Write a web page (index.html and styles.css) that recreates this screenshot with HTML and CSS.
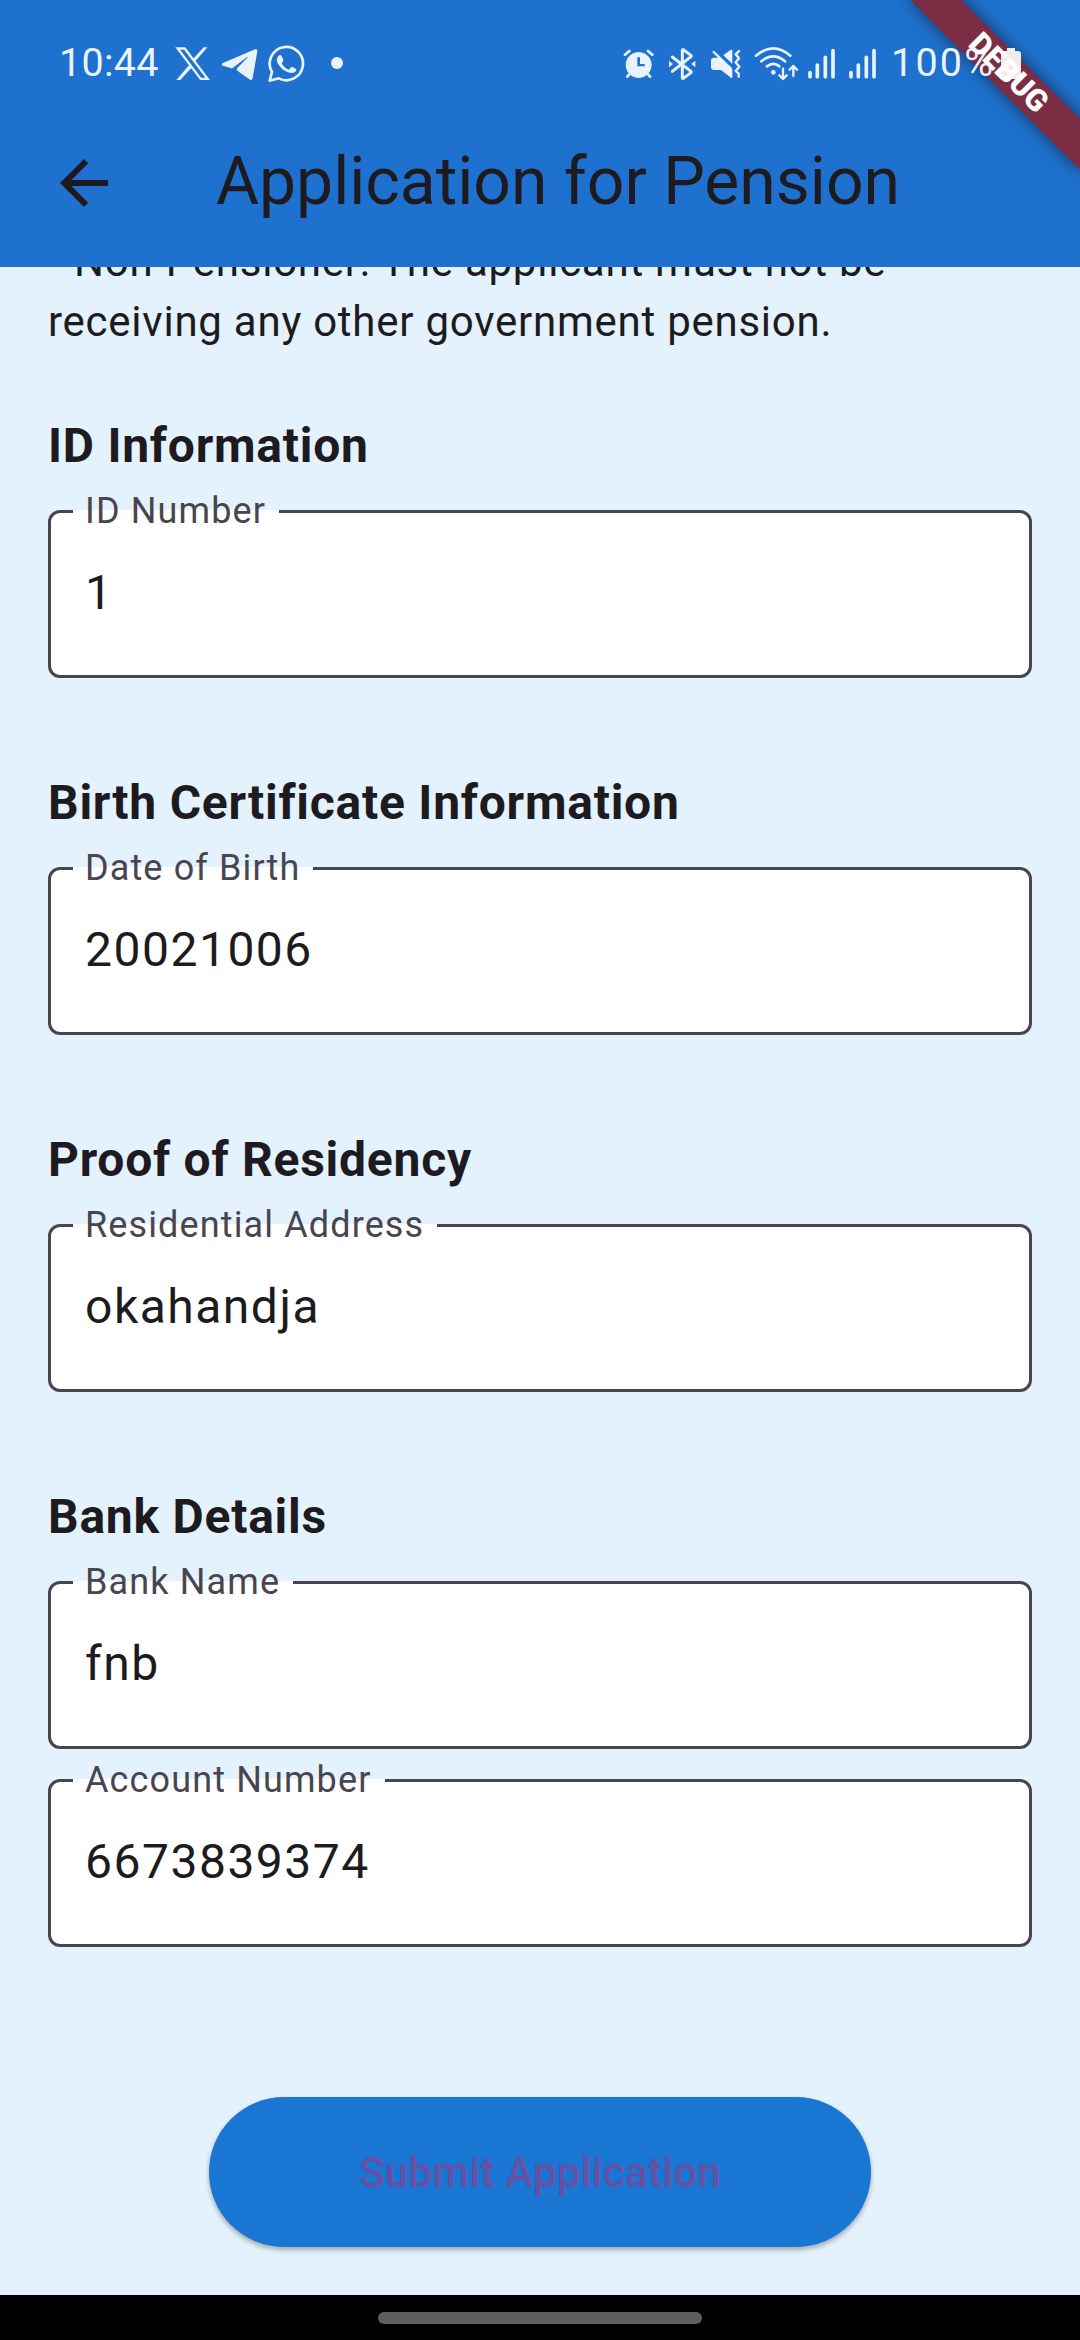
FILE: index.html
```html
<!DOCTYPE html>
<html lang="en">
<head>
<meta charset="utf-8">
<title>Application for Pension</title>
<link rel="stylesheet" href="styles.css">
</head>
<body>
<div class="screen">
  <header class="top">
    <div class="debug"><span class="debug-band">DEBUG</span></div>
    <div class="status">
      <span class="clock">10:44</span>
      <svg class="ic x" width="35" height="43" viewBox="405 66 105 129"><path fill="none" stroke="currentColor" stroke-width="7" d="M413 85.500H434L503 176.500H482Z"/><path d="M491 82H502L466 124L459 117ZM447 136L454 144L421 180H409Z"/></svg>
      <svg class="ic tg" width="37" height="43" viewBox="543 66 111 129"><path d="M547 130Q544 134 548 137L572 144Q577 146 581 142L620 112Q625 109 621 114L592 144Q588 149 593 153L628 178Q636 183 638 174L652 94Q653 86 645 88Z"/></svg>
      <svg class="ic wa" width="37" height="43" viewBox="684 66 111 129"><path d="M689 182L696 156A50 50 0 1 1 716 175Z" fill="none" stroke="currentColor" stroke-width="8" stroke-linejoin="round"/><path d="M716 107Q722 103 725 108L730 120Q731 124 725 130Q733 145 747 149L753 142Q756 140 759 142L768 147Q771 150 766 155Q758 162 744 157Q724 150 713 130Q707 116 716 107Z"/></svg>
      <svg class="ic dot" width="14" height="43" viewBox="870 66 42 129"><circle cx="891" cy="129" r="18"/></svg>
      <div class="status-right">
        <svg class="ic" width="31" height="43" viewBox="69 66 93 129"><path fill-rule="evenodd" d="M116 96A39 39 0 1 1 115.900 96ZM112 112V139H134V132H120V112Z"/><path d="M75 104L88 93M157 104L144 93M87 164L82 170M145 164L150 170" stroke="currentColor" stroke-width="8" stroke-linecap="round"/></svg>
        <svg class="ic bt" width="28" height="43" viewBox="204 66 84 129"><path d="M217 111L273 154Q275 156 273 158L250 175Q247 176 247 173V91Q247 88 250 89L273 106Q275 108 273 110L217 154" fill="none" stroke="currentColor" stroke-width="9" stroke-linecap="round" stroke-linejoin="round"/><path d="M207 122V142L219 132ZM286 122V142L274 132Z"/></svg>
        <svg class="ic mute" width="32" height="43" viewBox="330 66 96 129"><path d="M342 113H361L397 149V172Q397 176 393 173L363 150H342Q333 150 333 141V122Q333 113 342 113ZM370 106L390 91Q397 87 397 94V132Z"/><path d="M341 96L392 145M417 93L407 103L417 115L407 127L418 140L407 153L416 161V170" fill="none" stroke="currentColor" stroke-width="7" stroke-linecap="round" stroke-linejoin="round"/></svg>
        <svg class="ic wifi" width="45" height="43" viewBox="462 66 135 129"><g fill="none" stroke="currentColor" stroke-width="8" stroke-linecap="round" stroke-linejoin="round"><path d="M468 107Q520 63 571 107M484 124Q520 94 555 124M501 139Q520 124 538 139"/><path stroke-width="7" d="M549 146V176M538 166L549 177L560 166M580 168V138M569 149L580 138L591 149"/></g><circle cx="520" cy="157" r="7"/></svg>
        <svg class="ic sig" width="29" height="43" viewBox="621 66 87 129"><path d="M630 158V170M652 135V170M676 112V170M699 92V170" stroke="currentColor" stroke-width="11" stroke-linecap="round"/></svg>
        <svg class="ic sig2" width="29" height="43" viewBox="621 66 87 129"><path d="M630 158V170M652 135V170M676 112V170M699 92V170" stroke="currentColor" stroke-width="11" stroke-linecap="round"/></svg>
        <span class="pct">100%</span>
        <svg class="ic batt" width="20" height="43" viewBox="0 0 20 43"><path d="M6 6H14V9H17Q20 9 20 12V34Q20 37 17 37H3Q0 37 0 34V12Q0 9 3 9H6Z"/></svg>
      </div>
    </div>
    <div class="appbar">
      <svg class="back" width="72" height="72" viewBox="0 0 24 24"><path d="M20 11H7.830l5.590-5.590L12 4l-8 8 8 8 1.410-1.410L7.830 13H20v-2z"/></svg>
      <h1 class="title">Application for Pension</h1>
    </div>
  </header>
  <main class="content">
    <p class="intro">• Non-Pensioner: The applicant must not be<br>receiving any other government pension.</p>
    <section class="group">
      <h2 class="heading">ID Information</h2>
      <div class="field"><span class="label">ID Number</span><span class="value">1</span></div>
    </section>
    <section class="group">
      <h2 class="heading">Birth Certificate Information</h2>
      <div class="field"><span class="label">Date of Birth</span><span class="value">20021006</span></div>
    </section>
    <section class="group">
      <h2 class="heading">Proof of Residency</h2>
      <div class="field"><span class="label">Residential Address</span><span class="value">okahandja</span></div>
    </section>
    <section class="group">
      <h2 class="heading">Bank Details</h2>
      <div class="field"><span class="label">Bank Name</span><span class="value">fnb</span></div>
      <div class="field"><span class="label">Account Number</span><span class="value">6673839374</span></div>
    </section>
    <button class="submit">Submit Application</button>
  </main>
  <footer class="nav"><span class="pill"></span></footer>
</div>
</body>
</html>
```
FILE: styles.css
```css
* { box-sizing: border-box; }
body { margin: 0; font-family: Roboto, "Liberation Sans", sans-serif; color: #1d1b20; }
.screen { width: 1080px; height: 2340px; display: flex; flex-direction: column; background: #e3f2fd; overflow: hidden; }

.top { position: relative; z-index: 1; flex: none; height: 267px; background: #1f71cf; overflow: hidden; }
.status { position: relative; height: 99px; padding: 42px 59px 0; display: flex; align-items: flex-start; color: rgba(240, 248, 255, 0.97); }
.ic { flex: none; display: block; fill: currentColor; }
.clock, .pct { font-size: 39.500px; line-height: 42px; white-space: nowrap; }
.clock { width: 116px; letter-spacing: 0.300px; }
.tg { margin-left: 11px; }
.wa { margin-left: 10px; }
.dot { margin-left: 25px; }
.status-right { margin-left: auto; display: flex; align-items: flex-start; width: 398px; }
.bt, .mute { margin-left: 14px; }
.wifi { margin-left: 12px; }
.sig { margin-left: 8px; }
.sig2 { margin-left: 12px; }
.pct { margin-left: 14px; width: 111px; letter-spacing: 2.200px; }
.batt { color: rgba(255, 255, 255, 0.9); }

.appbar { height: 168px; padding: 0 48px; display: flex; align-items: center; gap: 96px; }
.back { display: block; flex: none; fill: #1d1b20; }
.title { margin: 0; padding-bottom: 2px; font-size: 66px; line-height: 84px; font-weight: 400; white-space: nowrap; }

/* Corner ribbon laid diagonally across the status bar */
.debug { position: absolute; right: 0; top: 0; width: 0; height: 0; transform: rotate(45deg); }
.debug-band { position: absolute; left: -120px; top: 84px; width: 240px; height: 36px; padding-left: 2px; background: #7b2d43; box-shadow: 0 0 18px rgba(0, 0, 0, 0.5); color: #fff; font-size: 30.600px; line-height: 36px; font-weight: 900; text-align: center; }

.content { flex: 1; padding: 0 48px; display: flex; flex-direction: column; }
.intro { margin: -35px 0 0; font-size: 42px; line-height: 60px; letter-spacing: 0.750px; white-space: nowrap; }
.group { display: flex; flex-direction: column; margin-bottom: 90px; }
.intro + .group { margin-top: 59px; }
.heading { margin: 0 0 30px; font-size: 48px; line-height: 69px; font-weight: 700; letter-spacing: 0.750px; }
.field { position: relative; height: 168px; padding: 52px 34px 0; background: #fff; border: 3px solid #49454f; border-radius: 12px; }
.field + .field { margin-top: 30px; }
.label { position: absolute; left: 22px; top: -23px; padding: 0 13px 0 12px; font-size: 36px; line-height: 42px; letter-spacing: 1.125px; color: #49454f; white-space: nowrap; background: linear-gradient(#fff, #fff) 0 20px / 100% 3px no-repeat; }
.value { display: block; font-size: 48px; line-height: 56px; letter-spacing: 1.500px; }
.submit { align-self: center; margin-top: 60px; width: 662px; height: 150px; padding: 1px 0 0; border: 0; border-radius: 75px; background: #1976d2; color: #6750a4; font: 500 42px/60px Roboto, sans-serif; letter-spacing: 0.300px; box-shadow: 0 3px 5px rgba(0, 0, 0, 0.300); }

.nav { flex: none; height: 45px; background: #000; display: flex; justify-content: center; padding-top: 17px; }
.pill { width: 324px; height: 12px; border-radius: 6px; background: #5e5e5e; }
```
